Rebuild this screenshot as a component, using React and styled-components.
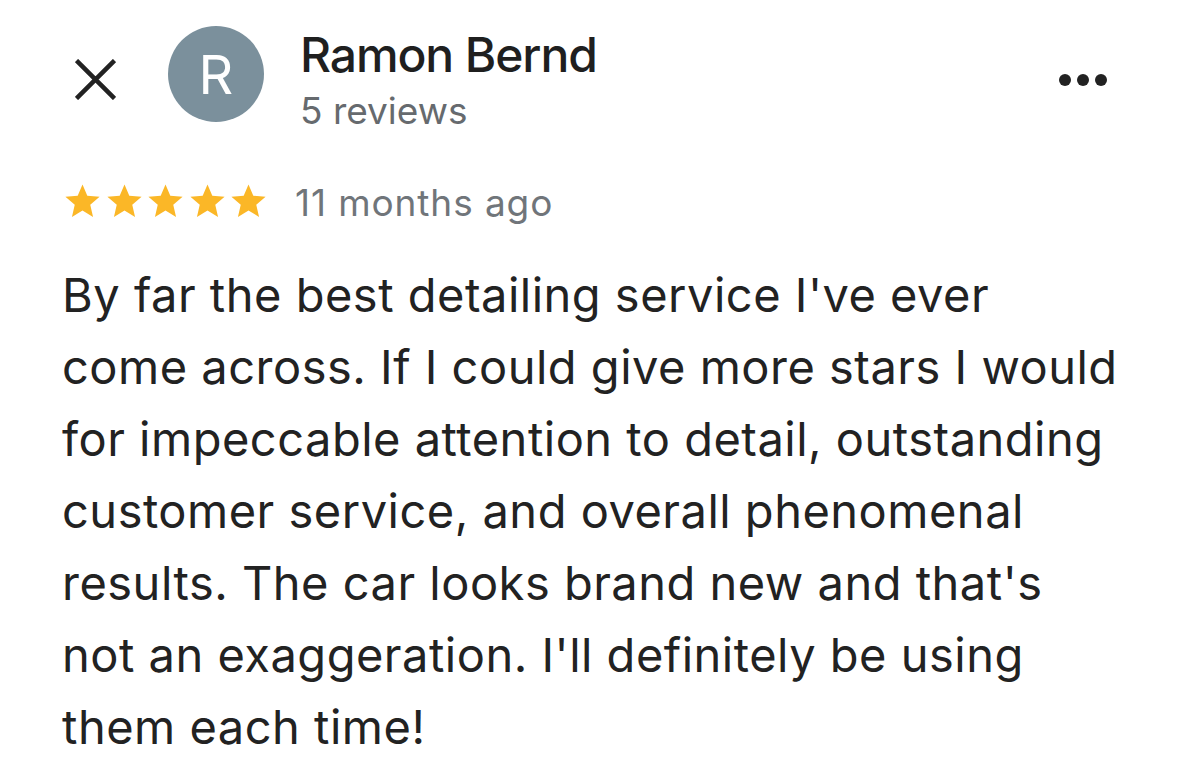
import styled, { createGlobalStyle } from "styled-components";

const GlobalStyle = createGlobalStyle`
    html, body {
        margin: 0;
        padding: 0;
        background: #fff;
    }

    body {
        font-family: Inter, "Noto Sans", "Liberation Sans", sans-serif;
        -webkit-font-smoothing: antialiased;
    }
`;

const Card = styled.div`
    width: 1179px;
    height: 780px;
    background: #fff;
    overflow: hidden;
    box-sizing: border-box;
    padding-left: 62px;
`;

const Header = styled.header`
    display: flex;
    align-items: flex-start;
    padding: 26px 72px 0 13px;
`;

const CloseButton = styled.button`
    width: 41px;
    height: 41px;
    margin-top: 33px;
    margin-right: 52px;
    padding: 0;
    border: none;
    background: none;
    display: flex;
    color: #222;
`;

const Avatar = styled.div`
    width: 96px;
    height: 96px;
    border-radius: 50%;
    background: #7b909c;
    color: #fff;
    font-size: 54px;
    display: flex;
    align-items: center;
    justify-content: center;
    margin-right: 38px;
    flex-shrink: 0;
`;

const Author = styled.div`
    display: flex;
    flex-direction: column;
    margin-top: 1px;

    h2 {
        margin: 0 0 0 -2px;
        font-size: 48px;
        line-height: 56px;
        font-weight: 500;
        color: #1f1f1f;
        letter-spacing: -1.1px;
    }

    p {
        margin: 6px 0 0 -2px;
        font-size: 37px;
        line-height: 44px;
        color: #666a6e;
    }
`;

const MoreButton = styled.button`
    margin-left: auto;
    margin-top: 48px;
    padding: 0;
    border: none;
    background: none;
    display: flex;
    gap: 6px;

    span {
        width: 12px;
        height: 12px;
        border-radius: 50%;
        background: #222;
    }
`;

const Rating = styled.div`
    display: flex;
    align-items: flex-start;
    margin-top: 48px;

    time {
        margin-left: 26px;
        font-size: 37px;
        line-height: 44px;
        letter-spacing: 0.9px;
        color: #70757a;
    }
`;

const Stars = styled.div`
    display: flex;
    gap: 0.5px;
    color: #fbb727;
`;

const ReviewText = styled.p`
    margin: 34px 0 0;
    font-size: 47px;
    line-height: 72px;
    color: #222;
    white-space: nowrap;
    letter-spacing: 0.5px;
`;

const Star = () => (
    <svg width="41" height="41" viewBox="0 0 24 24" fill="currentColor">
        <path d="M12 17.27L18.18 21l-1.64-7.03L22 9.24l-7.19-.61L12 2 9.19 8.63 2 9.24l5.46 4.73L5.82 21z" />
    </svg>
);

const lines = [
    "By far the best detailing service I've ever",
    "come across. If I could give more stars I would",
    "for impeccable attention to detail, outstanding",
    "customer service, and overall phenomenal",
    "results. The car looks brand new and that's",
    "not an exaggeration. I'll definitely be using",
    "them each time!",
];

const App = () => {
    return (
        <>
            <GlobalStyle />
            <Card>
                <Header>
                    <CloseButton aria-label="Close">
                        <svg width="41" height="41" viewBox="0 0 41 41" stroke="currentColor" strokeWidth="4.5">
                            <path d="M1.5 1.5L39.5 39.5M39.5 1.5L1.5 39.5" />
                        </svg>
                    </CloseButton>
                    <Avatar>R</Avatar>
                    <Author>
                        <h2>Ramon Bernd</h2>
                        <p>5 reviews</p>
                    </Author>
                    <MoreButton aria-label="More">
                        <span />
                        <span />
                        <span />
                    </MoreButton>
                </Header>
                <Rating>
                    <Stars>
                        {[0, 1, 2, 3, 4].map((i) => (
                            <Star key={i} />
                        ))}
                    </Stars>
                    <time>11 months ago</time>
                </Rating>
                <ReviewText>
                    {lines.map((line, i) => (
                        <span key={i}>
                            {line}
                            {i < lines.length - 1 && <br />}
                        </span>
                    ))}
                </ReviewText>
            </Card>
        </>
    );
};

export default App;
